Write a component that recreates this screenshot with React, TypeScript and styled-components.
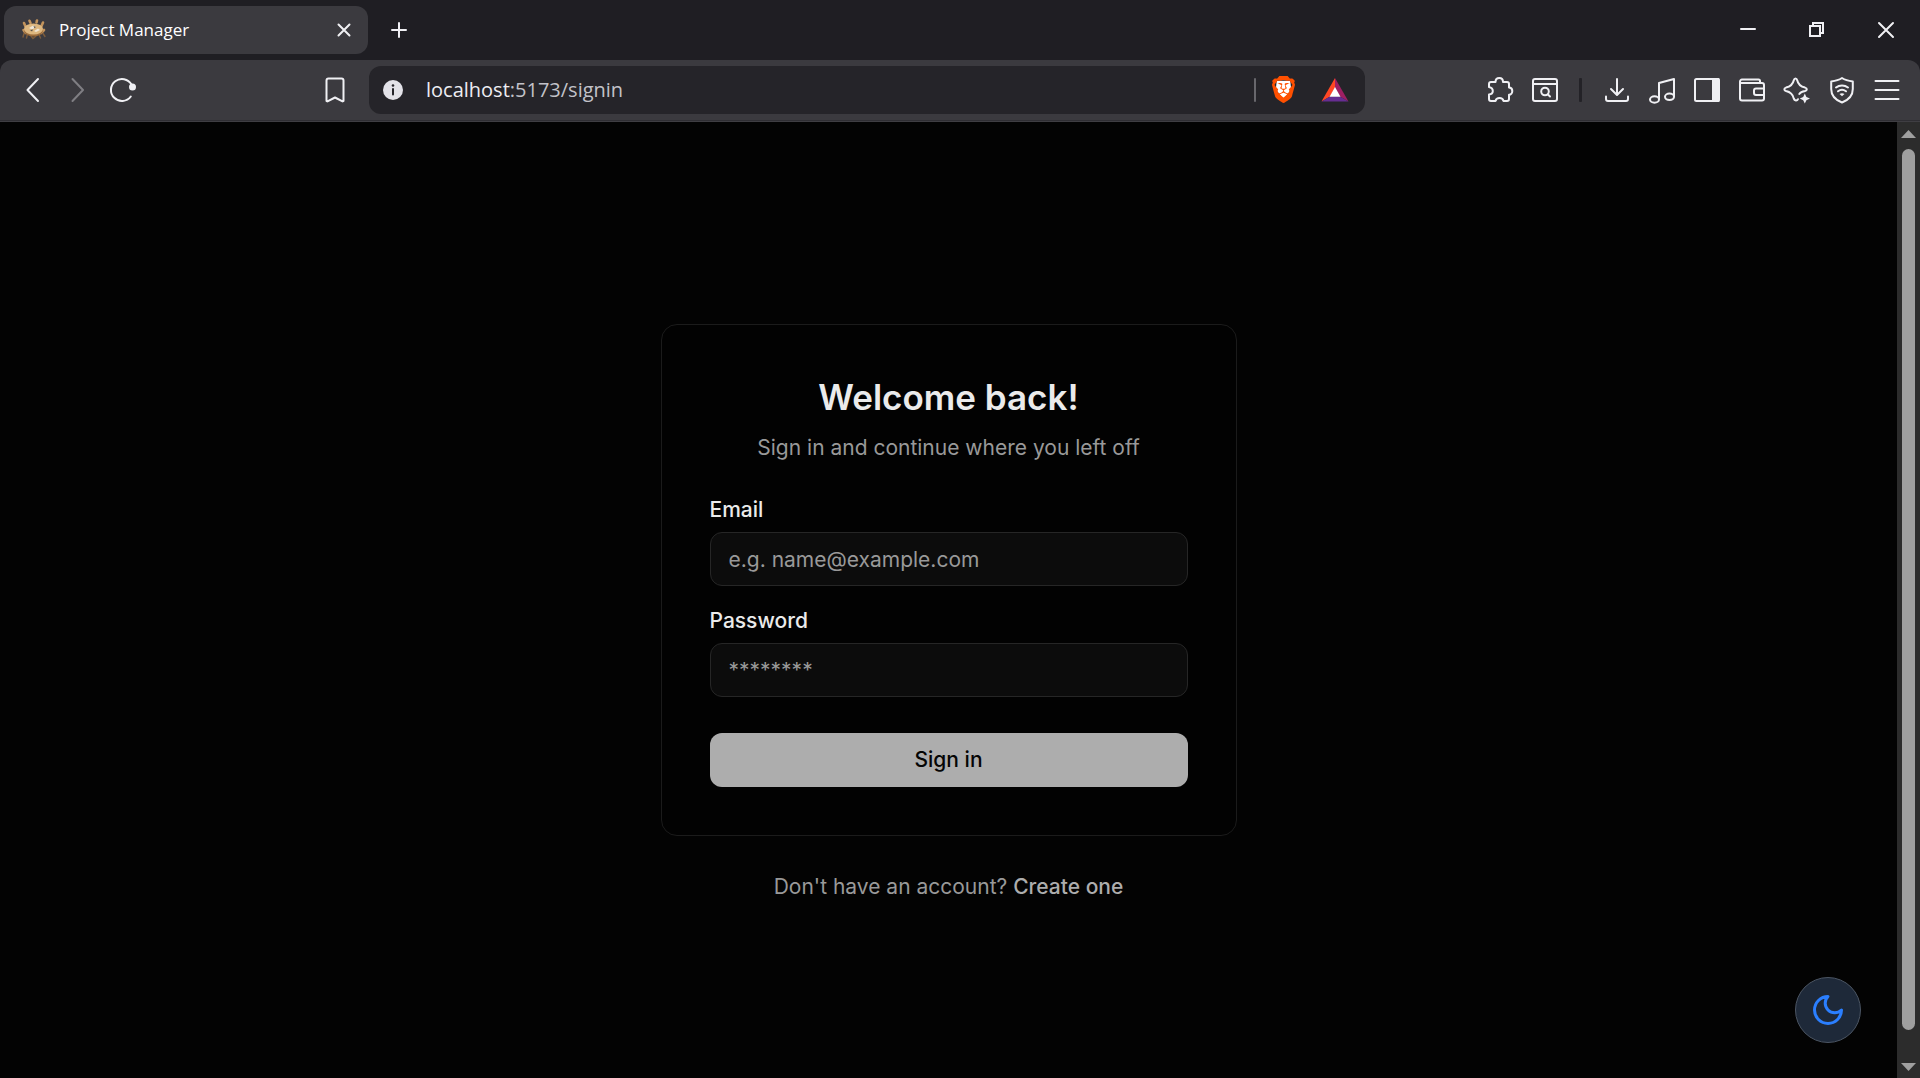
import React from 'react';
import styled, { createGlobalStyle } from 'styled-components';
import { SiBrave } from 'react-icons/si';

const GlobalStyle = createGlobalStyle`
  *, *::before, *::after { box-sizing: border-box; }
  html, body, #root { height: 100%; }
  body { margin: 0; background: #030303; overflow: hidden; }
  button, input { font: inherit; }
  button { border: 0; padding: 0; background: none; cursor: pointer; }
  svg { display: block; }
`;

const chromeFont = `'Segoe UI', 'Open Sans', 'Noto Sans', sans-serif`;
const pageFont = `Inter, 'Liberation Sans', sans-serif`;

const Window = styled.div`
  display: flex;
  flex-direction: column;
  height: 100vh;
  background: #1f1e23;
  font-family: ${chromeFont};
`;

const TabStrip = styled.header`
  display: flex;
  align-items: center;
  height: 60px;
  padding-left: 4px;
`;

const Tab = styled.div`
  display: flex;
  align-items: center;
  width: 364px;
  height: 48px;
  padding: 0 12px 0 16px;
  gap: 12px;
  border-radius: 12px;
  background: #3b3a3f;
  color: #ffffff;
  font-size: 17px;
  line-height: 24px;
`;

const TabTitle = styled.span`
  flex: 1;
`;

const IconButton = styled.button<{ $width?: number; $dim?: boolean }>`
  display: flex;
  flex: none;
  align-items: center;
  justify-content: center;
  width: ${(p) => p.$width ?? 45}px;
  height: 48px;
  color: ${(p) => (p.$dim ? '#7f7e83' : '#f0f0f4')};
`;

const WindowControls = styled.div`
  display: flex;
  margin-left: auto;
`;

const Toolbar = styled.nav`
  display: flex;
  align-items: center;
  height: 62px;
  padding: 0 11px 2px 10px;
  border-bottom: 1px solid #3f3e43;
  border-radius: 12px 12px 0 0;
  background: #3b3a3f;
  box-shadow: inset 0 -1px 0 #2f2e33;
`;

const Group = styled.div`
  display: flex;
  align-items: center;
`;

const NavGroup = styled(Group)`
  width: 347px;
  margin-right: 12px;
`;

const BookmarkButton = styled(IconButton)`
  margin-left: auto;
`;

const ToolGroup = styled(Group)`
  justify-content: flex-end;
  width: 544px;
`;

const AddressBar = styled.div`
  display: flex;
  flex: 1;
  align-items: center;
  height: 48px;
  padding: 0 5px 0 10px;
  border-radius: 12px;
  background: #252429;
`;

const Address = styled.a`
  flex: 1;
  margin-left: 19px;
  color: #c2c2c8;
  font-size: 20px;
  line-height: 28px;
  text-decoration: none;
`;

const Host = styled.span`
  color: #ededf2;
`;

const Divider = styled.span<{ $dark?: boolean }>`
  flex: none;
  width: ${(p) => (p.$dark ? 3 : 2)}px;
  height: 24px;
  margin: 0 ${(p) => (p.$dark ? 12 : 2)}px;
  border-radius: 1px;
  background: ${(p) => (p.$dark ? '#232227' : '#68676c')};
`;

const Viewport = styled.div`
  display: flex;
  flex: 1;
  min-height: 0;
  background: #030303;
`;

const Page = styled.main`
  position: relative;
  display: flex;
  flex: 1;
  flex-direction: column;
  align-items: center;
  justify-content: center;
  padding-top: 26px;
  color: #ebebeb;
  font-family: ${pageFont};
  font-size: 21px;
  line-height: 30px;
`;

const Card = styled.form`
  display: flex;
  flex-direction: column;
  width: 576px;
  max-width: 100%;
  padding: 48px;
  border: 1px solid #1b1b1b;
  border-radius: 16px;
  background: #020202;
`;

const Title = styled.h1`
  margin: 0 0 12px;
  font-size: 35px;
  font-weight: 600;
  line-height: 48px;
  text-align: center;
`;

const Subtitle = styled.p`
  margin: 0 0 32px;
  color: #999999;
  text-align: center;
`;

const Field = styled.div`
  display: flex;
  flex-direction: column;
  gap: 7px;
  margin-bottom: 20px;
`;

const Label = styled.label`
  font-weight: 500;
`;

const TextInput = styled.input`
  width: 100%;
  height: 54px;
  padding: 0 18px;
  border: 1px solid #262626;
  border-radius: 12px;
  outline: 0;
  background: #0c0c0c;
  color: #ebebeb;

  &::placeholder { color: #999999; opacity: 1; }
`;

const SubmitButton = styled.button`
  height: 54px;
  margin-top: 16px;
  border-radius: 12px;
  background: #adadad;
  color: #050505;
  font-weight: 500;
`;

const Footnote = styled.p`
  margin: 36px 0 0;
  color: #999999;
`;

const CreateLink = styled.a`
  color: #adadad;
  font-weight: 500;
  text-decoration: none;
`;

const ThemeToggle = styled.button`
  position: absolute;
  right: 36px;
  bottom: 35px;
  display: flex;
  align-items: center;
  justify-content: center;
  width: 66px;
  height: 66px;
  border: 1px solid #4b5563;
  border-radius: 50%;
  background: #1e2939;
  color: #2b7fff;
`;

const Scrollbar = styled.div`
  display: flex;
  flex-direction: column;
  align-items: center;
  width: 23px;
  padding: 8px 0 7px;
  background: #2c2c2c;
`;

const Thumb = styled.div`
  flex: 1;
  width: 13px;
  margin: 11px 0 33px;
  border-radius: 7px;
  background: #9f9f9f;
`;

type IconProps = { children: React.ReactNode; size?: number; stroke?: number };

const Icon = ({ children, size = 28, stroke = 2 }: IconProps) => (
  <svg
    width={size}
    height={size}
    viewBox={`0 0 ${size} ${size}`}
    fill="none"
    stroke="currentColor"
    strokeWidth={stroke}
    strokeLinecap="round"
    strokeLinejoin="round"
    aria-hidden="true"
  >
    {children}
  </svg>
);

const Favicon = () => (
  <svg width="27" height="24" viewBox="0 0 27 24" aria-hidden="true">
    <g fill="none" stroke="#c2935c" strokeWidth="2.6" strokeLinecap="round">
      <path d="M4 5L5.500 8.500" />
      <path d="M9.500 2.800L10.500 5" />
      <path d="M17 2.500L16.500 4.500" />
      <path d="M23 4.500L21.500 8" />
      <path d="M3.500 12L5.500 15" />
      <path d="M24 12L21 15" />
    </g>
    <g fill="none" stroke="#7d5c3c" strokeWidth="1.400" strokeLinecap="round">
      <path d="M4 15.500L3 19M7.500 16L6.500 20M23 15.500L25 18.500M19 16.500L20.500 20M11 18L13 20.500L16 18" />
    </g>
    <ellipse cx="13.500" cy="12.500" rx="9.500" ry="6" fill="#9a6b3b" />
    <ellipse cx="13.500" cy="11" rx="9.500" ry="5.600" fill="#ddb77f" />
    <path d="M9 10L13 7.500L16 9L12 11.500ZM14 13L18 10.500L20 12L16 14Z" fill="#efe6d6" />
    <path d="M13.500 8L16 9L14.500 10.200ZM10 12L13 11.500L12 13.500Z" fill="#57504a" />
  </svg>
);

const BatLogo = () => (
  <svg width="28" height="26" viewBox="0 0 28 26" aria-hidden="true">
    <path d="M14 1L.5 24.500L9 19.500L14 10.500Z" fill="#ff4724" />
    <path d="M14 1L27.500 24.500L19 19.500L14 10.500Z" fill="#9e1f63" />
    <path d="M.5 24.500H27.500L19 19.500H9Z" fill="#662d91" />
    <path d="M14 10L19.500 19.800H8.500Z" fill="#ffffff" />
  </svg>
);

const BraveLogo = () => (
  <svg width="27" height="27" viewBox="0 0 28 28" aria-hidden="true">
    <path d="M7 5H21L22 14L14 24L6 14Z" fill="#ffffff" />
    <SiBrave size={28} color="#ff5000" />
  </svg>
);

export default function App() {
  return (
    <>
      <GlobalStyle />
      <Window>
        <TabStrip>
          <Tab>
            <Favicon />
            <TabTitle>Project Manager</TabTitle>
            <IconButton type="button" $width={24} aria-label="Close tab">
              <Icon size={24} stroke={2}><path d="M6.500 6.500L17.500 17.500M17.500 6.500L6.500 17.500" /></Icon>
            </IconButton>
          </Tab>
          <IconButton type="button" $width={62} aria-label="New tab">
            <Icon><path d="M14 7V21M7 14H21" /></Icon>
          </IconButton>
          <WindowControls>
            <IconButton type="button" $width={69} aria-label="Minimise">
              <Icon><path d="M7 13H21" /></Icon>
            </IconButton>
            <IconButton type="button" $width={69} aria-label="Restore">
              <Icon>
                <g strokeLinejoin="miter">
                  <path d="M7 10H17V20H7Z" />
                  <path d="M10 10V7H20V17H17" />
                </g>
              </Icon>
            </IconButton>
            <IconButton type="button" $width={69} aria-label="Close window">
              <Icon><path d="M7 7L21 21M21 7L7 21" /></Icon>
            </IconButton>
          </WindowControls>
        </TabStrip>

        <Toolbar aria-label="Browser toolbar">
          <NavGroup>
            <IconButton type="button" aria-label="Back">
              <Icon><path d="M19 3L8.500 14L19 25" /></Icon>
            </IconButton>
            <IconButton type="button" $dim aria-label="Forward">
              <Icon><path d="M8.500 3L19 14L8.500 25" /></Icon>
            </IconButton>
            <IconButton type="button" aria-label="Reload">
              <Icon>
                <path d="M21.800 20.500A11 11 0 1 1 22.500 8.500" />
                <circle cx="23.500" cy="11" r="2.500" fill="currentColor" />
              </Icon>
            </IconButton>
            <BookmarkButton type="button" aria-label="Bookmark">
              <Icon><path d="M5.500 4.500a2 2 0 0 1 2-2h13a2 2 0 0 1 2 2V25l-1 .4L14 21.500L6.500 25.400L5.500 25Z" /></Icon>
            </BookmarkButton>
          </NavGroup>

          <AddressBar>
            <IconButton type="button" $width={28} aria-label="Site information">
              <Icon>
                <circle cx="14" cy="14" r="10" fill="#e3e2e8" stroke="none" />
                <path d="M14 13V18.500" stroke="#252429" />
                <circle cx="14" cy="9.500" r="1.300" fill="#252429" stroke="none" />
              </Icon>
            </IconButton>
            <Address href="#signin"><Host>localhost</Host>:5173/signin</Address>
            <Divider />
            <IconButton type="button" $width={51} aria-label="Brave Shields"><BraveLogo /></IconButton>
            <IconButton type="button" $width={51} aria-label="Brave Rewards"><BatLogo /></IconButton>
          </AddressBar>

          <ToolGroup>
            <IconButton type="button" aria-label="Extensions">
              <Icon>
                <path d="M5 6H9.500C9.500 3.500 11 2 13.300 2S17 3.500 17 6H21a2 2 0 0 1 2 2V11.500C25 11.500 26.300 13 26.300 15S25 18.800 23 18.800V23a2 2 0 0 1-2 2H17.500C17 22.800 15.500 22 13.500 22S10 22.800 9.500 25H5a2 2 0 0 1-2-2V18.500C5.500 18.300 6.800 17 6.800 15S5.500 11.500 3 11V8a2 2 0 0 1 2-2Z" />
              </Icon>
            </IconButton>
            <IconButton type="button" aria-label="Search tabs">
              <Icon>
                <rect x="2" y="3" width="24" height="22" rx="2" />
                <path d="M2 8H26" />
                <circle cx="14" cy="15.500" r="3.800" />
                <path d="M17 18.500L19 20.500" />
              </Icon>
            </IconButton>
            <Divider $dark />
            <IconButton type="button" aria-label="Downloads">
              <Icon><path d="M14 3V18M8 13L14 19L20 13M3 20.500V23a2 2 0 0 0 2 2H23a2 2 0 0 0 2-2V20.500" /></Icon>
            </IconButton>
            <IconButton type="button" aria-label="Playlist">
              <Icon>
                <path d="M11 23V7L26 3V20.500" />
                <ellipse cx="6.500" cy="23.500" rx="4.500" ry="3.200" />
                <ellipse cx="21.500" cy="20.800" rx="4.500" ry="3.200" />
              </Icon>
            </IconButton>
            <IconButton type="button" aria-label="Sidebar">
              <Icon>
                <rect x="2" y="3" width="24" height="22" rx="1.500" />
                <path d="M20 3H25.500V25H20Z" fill="currentColor" />
              </Icon>
            </IconButton>
            <IconButton type="button" aria-label="Wallet">
              <Icon>
                <path d="M22 7V5a1.500 1.500 0 0 0-1.500-1.500H4A2 2 0 0 0 2 5.500V22.500a2 2 0 0 0 2 2H24a2 2 0 0 0 2-2V9a2 2 0 0 0-2-2H4A1.500 1.500 0 0 1 2 5.500" />
                <path d="M26 12.500H18a2 2 0 0 0-2 2V17a2 2 0 0 0 2 2H26" />
              </Icon>
            </IconButton>
            <IconButton type="button" aria-label="Leo AI">
              <Icon>
                <path d="M15 23.200C14.200 25 11.500 25 10.800 22.600C9.800 18 7.500 16 3 15C.8 14.400 .8 12.200 3 11.600C7.500 10.600 9.800 8.500 10.800 4.200C11.400 1.800 13.600 1.800 14.200 4.200C15.200 8.500 17.400 10.600 22 11.600C24.400 12.200 24.400 14.400 22 15C18.800 15.700 17.300 16.500 16.300 18" />
                <path d="M21.800 17.500L23.400 21L27 22.600L23.400 24.200L21.800 27.600L20.200 24.200L16.800 22.600L20.200 21Z" fill="currentColor" stroke="none" />
              </Icon>
            </IconButton>
            <IconButton type="button" aria-label="VPN">
              <Icon>
                <path d="M14 2C17 4 21 5 24.800 5.500V13C24.800 19.500 20.500 24 14 26.500C7.500 24 3.200 19.500 3.200 13V5.500C7 5 11 4 14 2Z" />
                <path d="M8 11.500C11.500 8.800 16.500 8.800 20 11.500M10 15.300C12.500 13.300 15.500 13.300 18 15.300" />
                <path d="M11.500 18Q14 16.300 16.500 18L14 20.300Z" fill="currentColor" stroke="none" />
              </Icon>
            </IconButton>
            <IconButton type="button" aria-label="Menu">
              <Icon><path d="M2.500 5H25.500M2.500 14H25.500M2.500 23H25.500" /></Icon>
            </IconButton>
          </ToolGroup>
        </Toolbar>

        <Viewport>
          <Page>
            <Card onSubmit={(event) => event.preventDefault()}>
              <Title>Welcome back!</Title>
              <Subtitle>Sign in and continue where you left off</Subtitle>
              <Field>
                <Label htmlFor="email">Email</Label>
                <TextInput id="email" type="email" placeholder="e.g. name@example.com" />
              </Field>
              <Field>
                <Label htmlFor="password">Password</Label>
                <TextInput id="password" type="password" placeholder="********" />
              </Field>
              <SubmitButton type="submit">Sign in</SubmitButton>
            </Card>
            <Footnote>
              Don't have an account? <CreateLink href="#signup">Create one</CreateLink>
            </Footnote>
            <ThemeToggle type="button" aria-label="Toggle dark mode">
              <svg width="36" height="36" viewBox="0 0 24 24" fill="none" stroke="currentColor" strokeWidth="2" strokeLinecap="round" strokeLinejoin="round" aria-hidden="true">
                <path d="M12 3a6 6 0 0 0 9 9 9 9 0 1 1-9-9Z" />
              </svg>
            </ThemeToggle>
          </Page>
          <Scrollbar aria-hidden="true">
            <svg width="15" height="8" viewBox="0 0 15 8"><path d="M0 8L7.500 0L15 8Z" fill="#9f9f9f" /></svg>
            <Thumb />
            <svg width="15" height="8" viewBox="0 0 15 8"><path d="M0 0L7.500 8L15 0Z" fill="#9f9f9f" /></svg>
          </Scrollbar>
        </Viewport>
      </Window>
    </>
  );
}
